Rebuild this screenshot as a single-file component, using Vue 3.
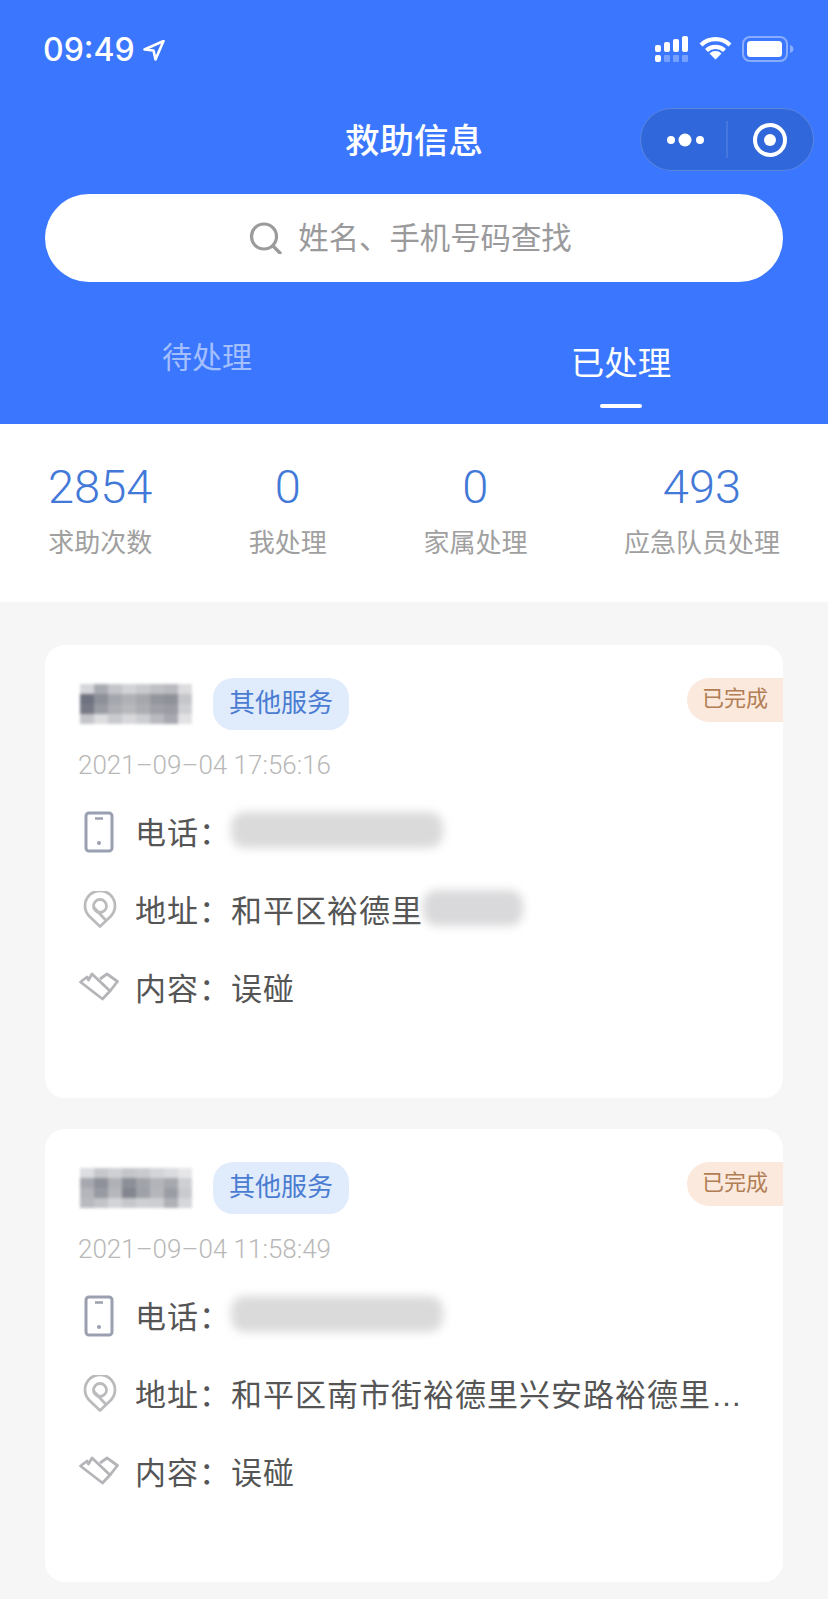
<script setup>
const tones = [
  ['#d5d6da', '#a9abb2', '#c4c5ca', '#d2d3d6', '#c9cacd', '#bfc0c5', '#b9bac0', '#dcdcdf'],
  ['#6f7280', '#8d8f99', '#a5a7ae', '#b0b1b6', '#a6a7ad', '#94969e', '#8f9199', '#c5c6ca'],
  ['#777a86', '#9a9ca4', '#aeafb4', '#b7b8bc', '#acadb2', '#a0a1a8', '#9a9ba3', '#cfd0d3'],
  ['#c4c5c9', '#dddde0', '#c9cace', '#d8d8db', '#cdced1', '#b9bac0', '#a8a9b0', '#e2e2e4']
]
const tonesB = [
  ['#dcdde0', '#c6c7cb', '#cfd0d3', '#c4c5c9', '#c9cace', '#d4d5d8', '#dadbde', '#e6e6e8'],
  ['#a6a8af', '#8f919a', '#b0b1b7', '#8d8f98', '#a1a3aa', '#b3b4b9', '#a6a8ae', '#cfd0d3'],
  ['#b4b5bb', '#989aa2', '#b6b7bc', '#84868f', '#9fa1a8', '#b5b6bb', '#9b9da5', '#c9cace'],
  ['#b9bac0', '#c3c4c8', '#d3d4d7', '#c6c7cb', '#cfd0d3', '#cdced1', '#b0b1b7', '#d6d7da']
]
const cards = [
  { date: '2021–09–04 17:56:16', tones, address: '和平区裕德里', hidden: true },
  { date: '2021–09–04 11:58:49', tones: tonesB, address: '和平区南市街裕德里兴安路裕德里…', hidden: false }
]
const stats = [
  { n: '2854', l: '求助次数' },
  { n: '0', l: '我处理' },
  { n: '0', l: '家属处理' },
  { n: '493', l: '应急队员处理' }
]
</script>

<template>
  <div class="page">
    <header class="top">
      <div class="status">
        <div class="clock">
          <span>09:49</span>
          <svg width="22" height="21" viewBox="0 0 22 21"><path d="M20.500 1 1.500 9.500 10.500 10.500 12.500 19.500Z" fill="none" stroke="#fff" stroke-width="2.600" stroke-linejoin="round"/></svg>
        </div>
        <div class="indicators">
          <svg width="34" height="27" viewBox="0 0 34 27">
            <g fill="#fff">
              <rect x="0" y="9" width="6" height="7" rx="2"/><rect x="9" y="6" width="6" height="10" rx="2"/><rect x="18" y="3" width="6" height="13" rx="2"/><rect x="27" y="0" width="6" height="16" rx="2"/>
              <rect x="0" y="19" width="6" height="7" rx="2"/>
            </g>
            <g fill="#fff" opacity=".3"><rect x="9" y="19" width="6" height="7" rx="1"/><rect x="18" y="19" width="6" height="7" rx="1"/><rect x="27" y="19" width="6" height="7" rx="1"/></g>
          </svg>
          <svg width="33" height="24" viewBox="0 0 33 24">
            <path d="M2 9a21 21 0 0 1 29 0M7.500 14.500a13 13 0 0 1 18 0" fill="none" stroke="#fff" stroke-width="4.200"/>
            <path d="M16.500 23.500 10.500 17.500a8.500 8.500 0 0 1 12 0Z" fill="#fff"/>
          </svg>
          <svg width="52" height="26" viewBox="0 0 52 26">
            <rect x="1" y="1" width="44" height="24" rx="7" fill="none" stroke="#fff" stroke-opacity=".4" stroke-width="2"/>
            <rect x="5" y="5" width="35" height="16" rx="3.500" fill="#fff"/>
            <path d="M48 9c2 .8 3.500 2 3.500 4s-1.500 3.200-3.500 4Z" fill="#fff" opacity=".4"/>
          </svg>
        </div>
      </div>

      <div class="nav">
        <h1 class="title">救助信息</h1>
        <div class="capsule">
          <svg width="174" height="63" viewBox="0 0 174 63">
            <circle cx="31" cy="32" r="4" fill="#fff"/><circle cx="45" cy="32" r="6.500" fill="#fff"/><circle cx="60" cy="32" r="4" fill="#fff"/>
            <path d="M87 13v37" stroke="#fff" stroke-opacity=".22" stroke-width="1"/>
            <circle cx="130" cy="32" r="15" fill="none" stroke="#fff" stroke-width="4"/><circle cx="130" cy="32" r="6" fill="#fff"/>
          </svg>
        </div>
      </div>

      <div class="search">
        <svg width="34" height="32" viewBox="0 0 34 32"><circle cx="15" cy="14.500" r="12.500" fill="none" stroke="#9b9b9d" stroke-width="3.200"/><path d="M24 24l7 7" stroke="#9b9b9d" stroke-width="3.400" stroke-linecap="round"/></svg>
        <span>姓名、手机号码查找</span>
      </div>

      <div class="tabs">
        <div class="tab">待处理</div>
        <div class="tab active">已处理<i class="bar"></i></div>
      </div>
    </header>

    <section class="stats">
      <div v-for="s in stats" :key="s.l" class="stat">
        <strong>{{ s.n }}</strong>
        <span>{{ s.l }}</span>
      </div>
    </section>

    <main class="list">
      <article v-for="c in cards" :key="c.date" class="card">
        <div class="head">
          <div class="mosaic">
            <template v-for="(row, r) in c.tones" :key="r">
              <i v-for="(tone, t) in row" :key="t" :style="{ background: tone }"></i>
            </template>
          </div>
          <span class="chip">其他服务</span>
        </div>
        <span class="badge">已完成</span>
        <div class="date">{{ c.date }}</div>

        <div class="row">
          <span class="slot">
            <svg class="phone-icon" width="30" height="42" viewBox="0 0 30 42"><rect x="2" y="2" width="26" height="38" rx="3" fill="none" stroke="#9aa0af" stroke-width="3"/><path d="M11 7.500h8" stroke="#9aa0af" stroke-width="2.500"/><circle cx="15" cy="32" r="2" fill="#9aa0af"/></svg>
          </span>
          <span class="label phone">电话：</span>
          <span class="smear"></span>
        </div>
        <div class="row">
          <span class="slot">
            <svg class="pin" width="34" height="37" viewBox="0 0 34 37"><path d="M17 35.500 6 25a15 15 0 1 1 22 0Z" fill="none" stroke="#bbbbbe" stroke-width="2.800" stroke-linejoin="round"/><circle cx="17" cy="15" r="6.500" fill="none" stroke="#bbbbbe" stroke-width="2.800"/><path d="M10.500 16 23 29.500" stroke="#bbbbbe" stroke-width="2.800"/></svg>
          </span>
          <span class="label">地址：</span>
          <span class="value">{{ c.address }}</span>
          <span v-if="c.hidden" class="smear short"></span>
        </div>
        <div class="row">
          <span class="slot">
            <svg class="shake" width="40" height="29" viewBox="0 0 40 29"><path d="M1.500 10 8 5l1.500 3L13 2 31 19l-7.500 8Z" fill="none" stroke="#b5b5b9" stroke-width="2.800" stroke-linejoin="round"/><path d="M21 7l7-5 10.500 7.500L31 19" fill="none" stroke="#b5b5b9" stroke-width="2.800" stroke-linejoin="round"/></svg>
          </span>
          <span class="label">内容：</span>
          <span class="value">误碰</span>
        </div>
      </article>
    </main>
  </div>
</template>

<style>
html, body { margin: 0; background: #f6f6f6; }
</style>

<style scoped>
.page {
  width: 828px;
  min-height: 1599px;
  background: #f6f6f6;
  font-family: "Liberation Sans", "Noto Sans CJK SC", sans-serif;
  overflow: hidden;
}
.top { background: #3b77fe; height: 424px; box-sizing: border-box; }
.status {
  height: 108px;
  box-sizing: border-box;
  padding: 34px 34px 0 43px;
  display: flex;
  justify-content: space-between;
  align-items: flex-start;
  color: #fff;
}
.clock {
  display: flex;
  align-items: center;
  gap: 8px;
  font: 500 32px/32px Inter, "Liberation Sans", sans-serif;
}
.indicators { display: flex; gap: 10px; align-items: flex-start; padding-top: 2px; }
.nav { position: relative; height: 63px; display: flex; justify-content: center; align-items: center; }
.title { margin: 0; padding-top: 4px; color: #fff; font-size: 34.500px; line-height: 59px; font-weight: 500; }
.capsule {
  position: absolute;
  right: 14px;
  top: 0;
  width: 174px;
  height: 63px;
  box-sizing: border-box;
  border-radius: 32px;
  background: #3067da;
  box-shadow: inset 0 0 0 1px rgba(255, 255, 255, .2);
}
.capsule svg { display: block; }
.search {
  margin: 23px 45px 0;
  height: 88px;
  border-radius: 44px;
  background: #fff;
  display: flex;
  align-items: center;
  justify-content: center;
  gap: 15px;
  padding-right: 7px;
  color: #9a9a9c;
  font-size: 30.400px;
}
.search span { margin-top: -5px; }
.tabs { display: grid; grid-template-columns: 1fr 1fr; }
.tab {
  display: flex;
  flex-direction: column;
  align-items: center;
  padding-top: 57px;
  color: rgba(255, 255, 255, .55);
  font-size: 30px;
  line-height: 38px;
}
.tab.active { padding-top: 62px; color: #fff; font-size: 33.500px; line-height: 40px; }
.bar { width: 42px; height: 4px; margin-top: 20px; background: #fff; border-radius: 2px; }
.stats {
  height: 178px;
  box-sizing: border-box;
  padding: 35px 48px 0;
  background: #fff;
  display: flex;
  justify-content: space-between;
}
.stat { display: flex; flex-direction: column; align-items: center; gap: 10px; }
.stat strong { color: #4279d8; font: 400 47px/56px Roboto, "Liberation Sans", sans-serif; font-weight: 300; }
.stat span { color: #a0a0a0; font-size: 26px; line-height: 36px; }
.list { padding: 43px 45px 0; display: flex; flex-direction: column; gap: 31px; }
.card {
  position: relative;
  height: 453px;
  box-sizing: border-box;
  padding: 33px 35px 0;
  background: #fff;
  border-radius: 20px;
}
.head { display: flex; align-items: center; gap: 21px; }
.mosaic {
  width: 112px;
  height: 40px;
  display: grid;
  grid-template-columns: repeat(8, 1fr);
  grid-template-rows: repeat(4, 1fr);
  filter: blur(1.500px);
}
.mosaic i { display: block; }
.chip {
  height: 52px;
  padding: 0 16px;
  border-radius: 20px;
  background: #e0ebfc;
  color: #4a7cd2;
  font-size: 26px;
  line-height: 50px;
}
.badge {
  position: absolute;
  top: 33px;
  right: 0;
  height: 44px;
  padding: 0 15px;
  border-radius: 22px 0 0 22px;
  background: #fce9dd;
  color: #b17e55;
  font-size: 22px;
  line-height: 42px;
}
.date { margin: 20px 0 0 -2px; color: #b8b8b8; font: 300 26px/30px Roboto, "Liberation Sans", sans-serif; }
.row { display: flex; align-items: center; height: 78px; color: #555; font-size: 31px; letter-spacing: 1px; }
.date + .row { margin-top: 11px; }
.slot { width: 55px; flex: none; display: flex; padding-left: 4px; box-sizing: border-box; }
.slot .phone-icon { margin-top: 3px; }
.slot .pin { margin: 3px 0 0 -1px; }
.slot .shake { margin-left: -5px; }
.label { width: 96px; flex: none; box-sizing: border-box; }
.label.phone { padding-left: 0; }
.value { white-space: nowrap; }
.smear {
  width: 212px;
  height: 36px;
  background: #dadada;
  border-radius: 14px;
  filter: blur(5px);
}
.smear.short { width: 100px; height: 36px; margin-left: 0; background: #d9d9db; }
</style>
